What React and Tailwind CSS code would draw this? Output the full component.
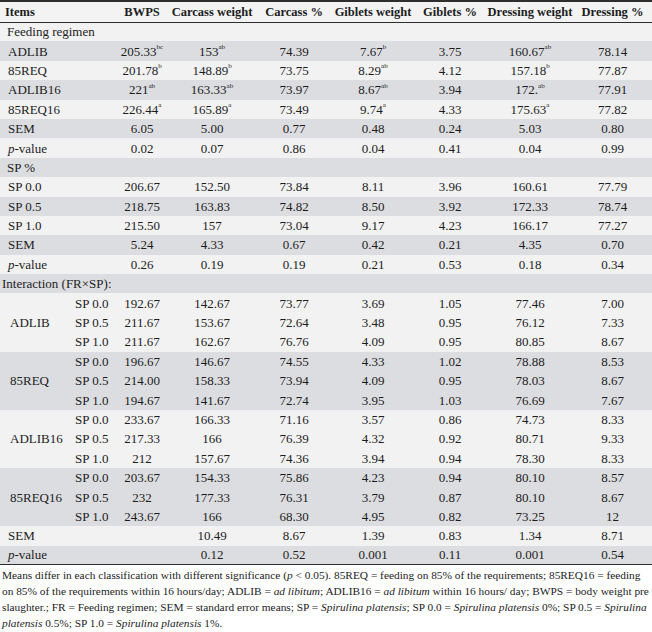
import React from "react";

const LIGHT = "bg-[#f2f2f3]";
const DARK = "bg-[#dcdde0]";

function V({ v }) {
  if (v === undefined || v === null || v === "") return null;
  if (Array.isArray(v)) {
    return (
      <span>
        {v[0]}
        <sup className="text-[7px] leading-none align-[3px]">{v[1]}</sup>
      </span>
    );
  }
  return <span>{v}</span>;
}

function Cells({ vals }) {
  return vals.map((v, i) => (
    <td key={i} className="text-center p-0 whitespace-nowrap">
      <V v={v} />
    </td>
  ));
}

function SectionRow({ label, bg, indent = "pl-[7px]" }) {
  return (
    <tr className={`h-[19.4px] ${bg}`}>
      <td colSpan={9} className={`p-0 ${indent} whitespace-nowrap`}>
        {label}
      </td>
    </tr>
  );
}

function Row({ label, vals, bg, italicP }) {
  return (
    <tr className={`h-[19.4px] ${bg}`}>
      <td colSpan={2} className="p-0 pl-[8px] whitespace-nowrap">
        {italicP ? (
          <span>
            <i>p</i>-value
          </span>
        ) : (
          label
        )}
      </td>
      <Cells vals={vals} />
    </tr>
  );
}

const feeding = [
  ["ADLIB", [["205.33", "bc"], ["153", "ab"], "74.39", ["7.67", "b"], "3.75", ["160.67", "ab"], "78.14"]],
  ["85REQ", [["201.78", "b"], ["148.89", "b"], "73.75", ["8.29", "ab"], "4.12", ["157.18", "b"], "77.87"]],
  ["ADLIB16", [["221", "ab"], ["163.33", "ab"], "73.97", ["8.67", "ab"], "3.94", ["172.", "ab"], "77.91"]],
  ["85REQ16", [["226.44", "a"], ["165.89", "a"], "73.49", ["9.74", "a"], "4.33", ["175.63", "a"], "77.82"]],
  ["SEM", ["6.05", "5.00", "0.77", "0.48", "0.24", "5.03", "0.80"]],
  ["p", ["0.02", "0.07", "0.86", "0.04", "0.41", "0.04", "0.99"]],
];

const sp = [
  ["SP 0.0", ["206.67", "152.50", "73.84", "8.11", "3.96", "160.61", "77.79"]],
  ["SP 0.5", ["218.75", "163.83", "74.82", "8.50", "3.92", "172.33", "78.74"]],
  ["SP 1.0", ["215.50", "157", "73.04", "9.17", "4.23", "166.17", "77.27"]],
  ["SEM", ["5.24", "4.33", "0.67", "0.42", "0.21", "4.35", "0.70"]],
  ["p", ["0.26", "0.19", "0.19", "0.21", "0.53", "0.18", "0.34"]],
];

const groups = [
  [
    "ADLIB",
    [
      ["192.67", "142.67", "73.77", "3.69", "1.05", "77.46", "7.00"],
      ["211.67", "153.67", "72.64", "3.48", "0.95", "76.12", "7.33"],
      ["211.67", "162.67", "76.76", "4.09", "0.95", "80.85", "8.67"],
    ],
  ],
  [
    "85REQ",
    [
      ["196.67", "146.67", "74.55", "4.33", "1.02", "78.88", "8.53"],
      ["214.00", "158.33", "73.94", "4.09", "0.95", "78.03", "8.67"],
      ["194.67", "141.67", "72.74", "3.95", "1.03", "76.69", "7.67"],
    ],
  ],
  [
    "ADLIB16",
    [
      ["233.67", "166.33", "71.16", "3.57", "0.86", "74.73", "8.33"],
      ["217.33", "166", "76.39", "4.32", "0.92", "80.71", "9.33"],
      ["212", "157.67", "74.36", "3.94", "0.94", "78.30", "8.33"],
    ],
  ],
  [
    "85REQ16",
    [
      ["203.67", "154.33", "75.86", "4.23", "0.94", "80.10", "8.57"],
      ["232", "177.33", "76.31", "3.79", "0.87", "80.10", "8.67"],
      ["243.67", "166", "68.30", "4.95", "0.82", "73.25", "12"],
    ],
  ],
];

const spLabels = ["SP 0.0", "SP 0.5", "SP 1.0"];

export default function App() {
  return (
    <div className="w-[652px] h-[632px] bg-white text-[#1c1c1c] overflow-hidden font-['Liberation_Serif','Times_New_Roman',serif]">
      <table className="w-[652px] table-fixed border-collapse text-[13px] leading-none font-['Liberation_Serif','Times_New_Roman',serif]">
        <colgroup>
          <col className="w-[70px]" />
          <col className="w-[45px]" />
          <col className="w-[54px]" />
          <col className="w-[86px]" />
          <col className="w-[78px]" />
          <col className="w-[80px]" />
          <col className="w-[74px]" />
          <col className="w-[86px]" />
          <col className="w-[79px]" />
        </colgroup>
        <thead>
          <tr className="h-[21px] bg-[#f3f3f4] border-t-[2px] border-b-[1.5px] border-[#2e2e2e] font-bold text-[12.5px]">
            <th colSpan={2} className="p-0 pl-[5px] text-left font-bold">Items</th>
            <th className="p-0 text-center font-bold">BWPS</th>
            <th className="p-0 text-center font-bold whitespace-nowrap">Carcass weight</th>
            <th className="p-0 text-center font-bold whitespace-nowrap">Carcass %</th>
            <th className="p-0 text-center font-bold whitespace-nowrap">Giblets weight</th>
            <th className="p-0 text-center font-bold whitespace-nowrap">Giblets %</th>
            <th className="p-0 text-center font-bold whitespace-nowrap">Dressing weight</th>
            <th className="p-0 text-center font-bold whitespace-nowrap">Dressing %</th>
          </tr>
        </thead>
        <tbody>
          <SectionRow label="Feeding regimen" bg={LIGHT} />
          {feeding.map(([l, vals], i) => (
            <Row key={"f" + i} label={l} vals={vals} italicP={l === "p"} bg={i % 2 === 0 ? DARK : LIGHT} />
          ))}
          <SectionRow label="SP %" bg={DARK} />
          {sp.map(([l, vals], i) => (
            <Row key={"s" + i} label={l} vals={vals} italicP={l === "p"} bg={i % 2 === 0 ? LIGHT : DARK} />
          ))}
          <SectionRow label="Interaction (FR×SP):" bg={DARK} indent="pl-[2px]" />
          {groups.map(([g, rows], gi) =>
            rows.map((vals, ri) => (
              <tr key={g + ri} className={`h-[19.4px] ${gi % 2 === 0 ? LIGHT : DARK}`}>
                {ri === 0 && (
                  <td rowSpan={3} className="p-0 pl-[10px] whitespace-nowrap align-middle">
                    {g}
                  </td>
                )}
                <td className="p-0 pl-[5px] whitespace-nowrap">{spLabels[ri]}</td>
                <Cells vals={vals} />
              </tr>
            ))
          )}
          <Row label="SEM" vals={["", "10.49", "8.67", "1.39", "0.83", "1.34", "8.71"]} bg={LIGHT} />
          <tr className={`h-[19.4px] ${DARK} border-b-[1.5px] border-[#2e2e2e]`}>
            <td colSpan={2} className="p-0 pl-[8px] whitespace-nowrap">
              <i>p</i>-value
            </td>
            <Cells vals={["", "0.12", "0.52", "0.001", "0.11", "0.001", "0.54"]} />
          </tr>
        </tbody>
      </table>
      <div className="pl-[2px] pt-[3px] text-[11.35px] leading-[15.7px] text-[#1c1c1c] font-['Liberation_Serif','Times_New_Roman',serif]">
        <div className="whitespace-nowrap">
          Means differ in each classification with different significance (<i>p</i> &lt; 0.05). 85REQ = feeding on 85% of the requirements; 85REQ16 = feeding
        </div>
        <div className="whitespace-nowrap">
          on 85% of the requirements within 16 hours/day; ADLIB = <i>ad libitum</i>; ADLIB16 = <i>ad libitum</i> within 16 hours/ day; BWPS = body weight pre
        </div>
        <div className="whitespace-nowrap">
          slaughter.; FR = Feeding regimen; SEM = standard error means; SP = <i>Spirulina platensis</i>; SP 0.0 = <i>Spirulina platensis</i> 0%; SP 0.5 = <i>Spirulina</i>
        </div>
        <div className="whitespace-nowrap">
          <i>platensis</i> 0.5%; SP 1.0 = <i>Spirulina platensis</i> 1%.
        </div>
      </div>
    </div>
  );
}
